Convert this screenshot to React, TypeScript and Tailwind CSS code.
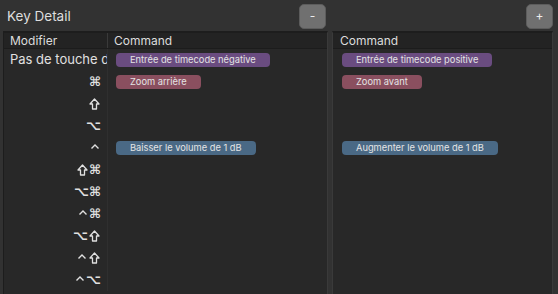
import React from "react";

type Pill = { label: string; tone: "purple" | "rose" | "blue" };

const toneClass: Record<Pill["tone"], string> = {
  purple: "bg-[#6a4c80]",
  rose: "bg-[#8a4f5f]",
  blue: "bg-[#4a6985]",
};

// modifier keys per row, with the command bound on each side
const rows: { mod: string; minus?: Pill; plus?: Pill }[] = [
  {
    mod: "Pas de touche de modification",
    minus: { label: "Entrée de timecode négative", tone: "purple" },
    plus: { label: "Entrée de timecode positive", tone: "purple" },
  },
  { mod: "⌘", minus: { label: "Zoom arrière", tone: "rose" }, plus: { label: "Zoom avant", tone: "rose" } },
  { mod: "⇧" },
  { mod: "⌥" },
  {
    mod: "⌃",
    minus: { label: "Baisser le volume de 1 dB", tone: "blue" },
    plus: { label: "Augmenter le volume de 1 dB", tone: "blue" },
  },
  { mod: "⇧⌘" },
  { mod: "⌥⌘" },
  { mod: "⌃⌘" },
  { mod: "⌥⇧" },
  { mod: "⌃⇧" },
  { mod: "⌃⌥" },
];

// the font's shift arrow and control caret are tiny, so draw them
function ShiftGlyph() {
  return (
    <svg width="11" height="12" viewBox="0 0 11 12" className="mx-[1px]">
      <path
        d="M5.5 1 L10 6 H7.5 V11 H3.5 V6 H1 Z"
        fill="none"
        stroke="#e0e0e0"
        strokeWidth="1.3"
        strokeLinejoin="round"
      />
    </svg>
  );
}

function CaretGlyph() {
  return (
    <svg width="10" height="12" viewBox="0 0 10 12" className="mx-[1px]">
      <path d="M1.5 6.5 L5 3 L8.5 6.5" fill="none" stroke="#e0e0e0" strokeWidth="1.4" />
    </svg>
  );
}

function ModKeys({ keys }: { keys: string }) {
  return (
    <span className="flex items-center">
      {Array.from(keys).map((k, i) =>
        k === "⇧" ? (
          <ShiftGlyph key={i} />
        ) : k === "⌃" ? (
          <CaretGlyph key={i} />
        ) : (
          <span key={i} className="text-[13px] font-bold">
            {k}
          </span>
        )
      )}
    </span>
  );
}

function CommandPill({ pill }: { pill?: Pill }) {
  if (!pill) return null;
  return (
    <span
      className={`inline-flex h-[14px] items-center rounded-[4px] pl-[14px] pr-[14px] text-[9.3px] leading-none text-[#e4e4e4] ${toneClass[pill.tone]}`}
    >
      {pill.label}
    </span>
  );
}

function KeyButton({ children }: { children: React.ReactNode }) {
  return (
    <button className="flex h-[25px] w-[27px] items-center justify-center rounded-[5px] border border-[#5c5c5c] bg-[#707070] text-[12px] text-[#ececec]">
      {children}
    </button>
  );
}

export default function App() {
  return (
    <div
      className="flex h-[294px] w-[558px] overflow-hidden bg-[#323232] text-[#dcdcdc]"
      style={{ fontFamily: "Inter, 'DejaVu Sans', sans-serif" }}
    >
      {/* left side: title, minus key and modifier table */}
      <div className="ml-[3px] flex w-[325px] flex-col">
        <div className="flex h-[31px] items-center justify-between pt-[1px]">
          <span className="pl-[4px] text-[13.5px] text-[#dedede]">Key Detail</span>
          <div className="mr-[2px]">
            <KeyButton>-</KeyButton>
          </div>
        </div>
        <div className="flex flex-1 flex-col border-l border-t-2 border-[#1d1d1d] border-r border-r-[#3a3a3a] bg-[#282828]">
          <div className="flex h-[16px] border-b border-[#1c1c1c] bg-[#232323] text-[12px] leading-none">
            <div className="flex w-[104px] items-center border-r border-[#3a3a3a] pl-[6px]">Modifier</div>
            <div className="flex items-center pl-[6px]">Command</div>
          </div>
          <div className="flex flex-col">
            {rows.map((r, i) => (
              <div key={i} className="flex h-[22px]">
                <div
                  className={`flex w-[104px] items-center overflow-hidden border-r border-[#2f2f2f] text-[#e0e0e0] ${
                    i === 0 ? "pl-[6px]" : "justify-end pr-[6px]"
                  }`}
                  style={i === 0 ? undefined : { fontFamily: "'DejaVu Sans', sans-serif" }}
                >
                  {i === 0 ? (
                    <span className="max-w-[97px] overflow-hidden whitespace-nowrap text-[13px]">{r.mod}</span>
                  ) : (
                    <ModKeys keys={r.mod} />
                  )}
                </div>
                <div className="flex items-center pl-[8px]">
                  <CommandPill pill={r.minus} />
                </div>
              </div>
            ))}
          </div>
        </div>
      </div>

      {/* right side: plus key and its commands */}
      <div className="ml-[4px] flex w-[221px] flex-col">
        <div className="flex h-[31px] items-center justify-end pt-[1px]">
          <KeyButton>+</KeyButton>
        </div>
        <div className="flex flex-1 flex-col border-l border-l-[#3a3a3a] border-t-2 border-[#1d1d1d] border-r border-r-[#3a3a3a] bg-[#282828]">
          <div className="flex h-[16px] items-center border-b border-[#1c1c1c] bg-[#232323] pl-[7px] text-[12px] leading-none">
            Command
          </div>
          <div className="flex flex-col">
            {rows.map((r, i) => (
              <div key={i} className="flex h-[22px] items-center pl-[9px]">
                <CommandPill pill={r.plus} />
              </div>
            ))}
          </div>
        </div>
      </div>
    </div>
  );
}
